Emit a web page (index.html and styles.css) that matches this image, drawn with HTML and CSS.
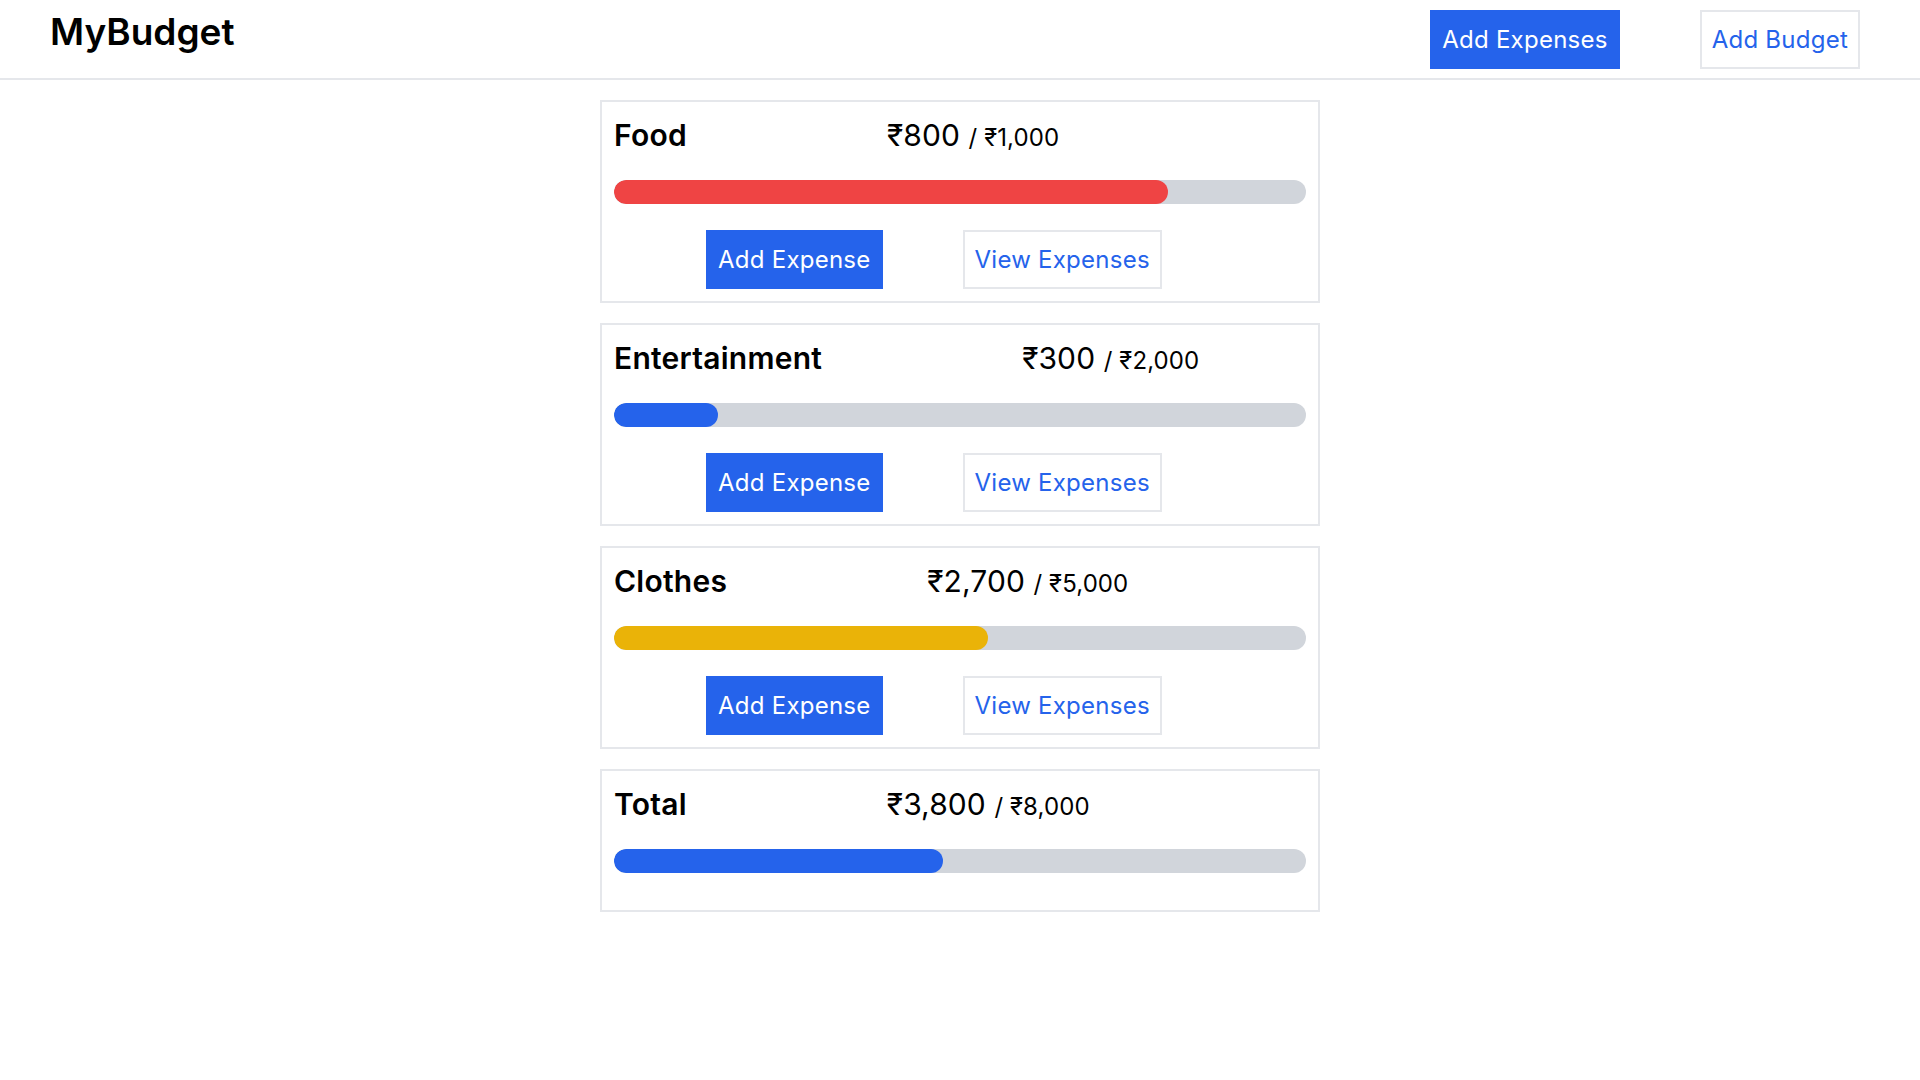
FILE: index.html
```html
<!DOCTYPE html>
<html lang="en">
<head>
<meta charset="utf-8">
<title>MyBudget</title>
<link rel="stylesheet" href="styles.css">
</head>
<body>
<header class="topbar">
  <h1 class="brand">MyBudget</h1>
  <div class="top-actions">
    <button class="btn btn-primary">Add Expenses</button>
    <button class="btn btn-outline">Add Budget</button>
  </div>
</header>
<main class="list">
  <section class="card">
    <div class="card-head">
      <h2 class="card-title">Food</h2>
      <div class="amount">₹800 <span class="amount-max">/ ₹1,000</span></div>
    </div>
    <div class="track"><div class="fill fill-red" style="width:80%"></div></div>
    <div class="card-actions">
      <button class="btn btn-primary">Add Expense</button>
      <button class="btn btn-outline">View Expenses</button>
    </div>
  </section>
  <section class="card">
    <div class="card-head">
      <h2 class="card-title">Entertainment</h2>
      <div class="amount">₹300 <span class="amount-max">/ ₹2,000</span></div>
    </div>
    <div class="track"><div class="fill fill-blue" style="width:15%"></div></div>
    <div class="card-actions">
      <button class="btn btn-primary">Add Expense</button>
      <button class="btn btn-outline">View Expenses</button>
    </div>
  </section>
  <section class="card">
    <div class="card-head">
      <h2 class="card-title">Clothes</h2>
      <div class="amount">₹2,700 <span class="amount-max">/ ₹5,000</span></div>
    </div>
    <div class="track"><div class="fill fill-yellow" style="width:54%"></div></div>
    <div class="card-actions">
      <button class="btn btn-primary">Add Expense</button>
      <button class="btn btn-outline">View Expenses</button>
    </div>
  </section>
  <section class="card card-total">
    <div class="card-head">
      <h2 class="card-title">Total</h2>
      <div class="amount">₹3,800 <span class="amount-max">/ ₹8,000</span></div>
    </div>
    <div class="track"><div class="fill fill-blue" style="width:47.5%"></div></div>
  </section>
</main>
</body>
</html>
```

FILE: styles.css
```css
* { box-sizing: border-box; }

html, body {
  margin: 0;
  padding: 0;
  background: #ffffff;
  color: #000000;
  font-family: Inter, "Noto Sans", "Liberation Sans", sans-serif;
}

.topbar {
  height: 80px;
  border-bottom: 2px solid #e5e7eb;
  display: flex;
  align-items: flex-start;
  justify-content: space-between;
  padding: 0 60px 0 50px;
}

.brand {
  margin: 12px 0 0;
  font-size: 37px;
  line-height: 40px;
  font-weight: 600;
}

.top-actions {
  display: flex;
  gap: 80px;
  margin-top: 10px;
}

.btn {
  height: 59px;
  padding: 0 10px;
  border: 2px solid #e5e7eb;
  background: #ffffff;
  font-family: inherit;
  font-size: 24px;
  line-height: 32px;
  font-weight: 400;
  letter-spacing: 0.25px;
  display: flex;
  align-items: center;
  cursor: pointer;
}

.btn-primary {
  background: #2563eb;
  border-color: #2563eb;
  color: #ffffff;
}

.btn-outline {
  color: #2563eb;
}

.list {
  width: 720px;
  margin: 20px auto 0;
  display: flex;
  flex-direction: column;
  gap: 20px;
}

.card {
  border: 2px solid #e5e7eb;
  padding: 12px;
}

.card-head {
  display: flex;
  align-items: baseline;
  gap: 200px;
  height: 42px;
  line-height: 42px;
}

.card-title {
  margin: 0;
  font-size: 30px;
  font-weight: 600;
  line-height: 42px;
  letter-spacing: 0.25px;
}

.amount {
  font-size: 30px;
  line-height: 42px;
  letter-spacing: 0.1px;
}

.amount-max {
  font-size: 24px;
}

.track {
  height: 24px;
  margin-top: 24px;
  border-radius: 12px;
  background: #d1d5db;
  overflow: hidden;
}

.card-total .track {
  margin-bottom: 25px;
}

.fill {
  height: 100%;
  border-radius: 12px;
}

.fill-red { background: #ef4444; }
.fill-blue { background: #2563eb; }
.fill-yellow { background: #eab308; }

.card-actions {
  display: flex;
  gap: 80px;
  margin-top: 26px;
  padding-left: 92px;
}
```
